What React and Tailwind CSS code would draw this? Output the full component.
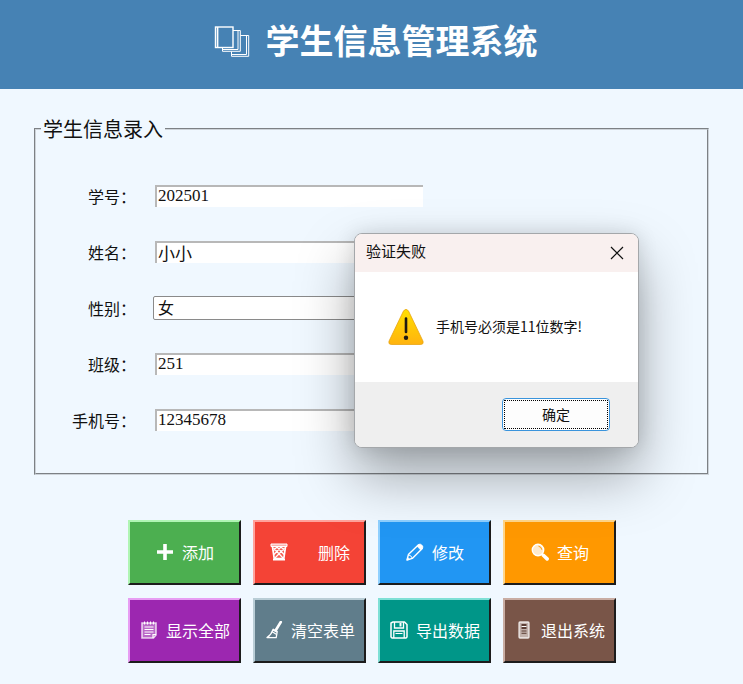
import React from "react";

const fields = [
  { id: "student-id", label: "学号：", value: "202501" },
  { id: "name", label: "姓名：", value: "小小" },
  { id: "gender", label: "性别：", value: "女", options: ["男", "女"] },
  { id: "class", label: "班级：", value: "251" },
  { id: "phone", label: "手机号：", value: "12345678" },
];

const PagesIcon = () => (
  <svg className="h-8 w-9 shrink-0" viewBox="0 0 36 32" fill="none" stroke="#fff">
    <rect x="1.5" y="1" width="17.5" height="20.5" strokeWidth="1.4" />
    <path d="M3.6 1v20" strokeWidth="1.6" />
    <path d="M19 4.5h7.3v20.8H8.500v-3.600M24 4.500v19H8.500" strokeWidth="1" />
    <path d="M26.500 9.500h8.200v20.800H17.500v-4.800M32.500 9.500v19H17.500" strokeWidth="1" />
  </svg>
);

const PlusIcon = () => (
  <svg className="h-[18px] w-[18px] shrink-0" viewBox="0 0 18 18">
    <path d="M9 1v16M1 9h16" stroke="#fff" strokeWidth="3.6" />
  </svg>
);

const TrashIcon = () => (
  <svg className="h-[18px] w-[18px] shrink-0" viewBox="0 0 18 18" fill="none" stroke="#fff">
    <path d="M1 1h16v2.500H1z" fill="#fff" fillOpacity="0.6" strokeWidth="1" />
    <path d="M2.5 4l1.700 11.500h9.600L15.500 4" fill="#fff" fillOpacity="0.15" strokeWidth="1.700" />
    <path
      d="M3.500 5l9.500 10M7 4l7 7.500M11 4l4 4M14.500 5L5 15M11 4l-7 7.500M7 4L3 8"
      strokeWidth="1.200"
    />
    <path d="M3 16.600h12" strokeWidth="1.800" />
  </svg>
);

const PencilIcon = () => (
  <svg className="h-[18px] w-[18px] shrink-0" viewBox="0 0 18 18" fill="none" stroke="#fff">
    <path d="M1 17l1.400-5.400L12.500 1.800l3.800 3.700L6.300 15.400z" strokeWidth="1.400" strokeLinejoin="round" />
    <path d="M11 3.200l2-2q1.200-.8 2.600.6l.8.8q1.200 1.300.3 2.500l-2 2z" fill="#fff" strokeWidth="0.5" />
    <path d="M2.400 11.800q2.800.4 4 3.600" strokeWidth="1" />
    <path d="M1 17l.7-2.600 2 1.900z" fill="#fff" strokeWidth="0.5" />
  </svg>
);

const SearchIcon = () => (
  <svg className="h-[18px] w-[18px] shrink-0" viewBox="0 0 18 18">
    <circle cx="7" cy="7" r="5.700" fill="#fff" fillOpacity="0.8" stroke="#fff" strokeWidth="1.400" />
    <path d="M7.500 3.200a4 4 0 0 1 3.300 3.500" fill="none" stroke="#ff9800" strokeWidth="1" />
    <path d="M11 11l1.600 1.400" stroke="#fff" strokeWidth="2" />
    <path d="M12.300 12.300l3.800 3.600" stroke="#fff" strokeWidth="3.600" strokeLinecap="round" />
  </svg>
);

const ListIcon = () => (
  <svg className="h-[18px] w-[18px] shrink-0" viewBox="0 0 18 18" fill="none" stroke="#fff">
    <path d="M2 2h14v12l-2.500 3H2z" fill="#fff" fillOpacity="0.3" strokeWidth="1.600" strokeOpacity="0.75" />
    <path d="M4.500.5v3M7.500.5v3M10.500.5v3M13.500.5v3" strokeWidth="1" />
    <path d="M4.500 6h9M4.500 8.500h9M4.500 11h9M4.500 13.500h6" strokeWidth="1" />
    <path d="M16 13.500h-3V17" strokeWidth="1.200" />
  </svg>
);

const BroomIcon = () => (
  <svg className="h-[18px] w-[18px] shrink-0" viewBox="0 0 18 18" fill="none" stroke="#fff">
    <path d="M15.800 1L10.600 9.500" strokeWidth="2.600" strokeLinecap="round" />
    <path d="M8.200 8.200l4 2.400-1 6H2q4.400-3 6.200-8.400z" strokeWidth="1.300" strokeLinejoin="round" />
    <path d="M7.800 8.600l4.200 2.600M7.200 10.800l4 2.400" strokeWidth="1.300" />
  </svg>
);

const SaveIcon = () => (
  <svg className="h-[18px] w-[18px] shrink-0" viewBox="0 0 18 18" fill="none" stroke="#fff">
    <path d="M3 1h11.500L17 3.500V16l-1 1H2l-1-1V2z" strokeWidth="1.500" strokeLinejoin="round" />
    <path d="M4.500 1v6h9V1" strokeWidth="1.300" />
    <path d="M10.500 2v3.500" strokeWidth="2" />
    <path d="M3.800 17v-7h10.400v7" strokeWidth="1.300" />
    <path d="M5.500 12.500h7" strokeWidth="1" />
  </svg>
);

const DoorIcon = () => (
  <svg className="h-[18px] w-[18px] shrink-0" viewBox="0 0 18 18" fill="none" stroke="#fff">
    <rect x="4" y="1" width="10" height="16" rx="1" fill="#fff" fillOpacity="0.55" strokeWidth="1.300" strokeOpacity="0.8" />
    <rect x="6.500" y="3" width="5" height="5" fill="#5d3f36" stroke="none" />
    <path d="M6.500 5.500h5" strokeWidth="1" />
    <path d="M6.500 10h5M6.500 12.300h5" stroke="#5d3f36" strokeWidth="1" />
  </svg>
);

const actions = [
  { label: "添加", icon: PlusIcon, gap: "gap-2", color: "bg-[#4caf50] border-t-[#b0f5b4] border-l-[#b0f5b4]" },
  { label: "删除", icon: TrashIcon, gap: "gap-[30px]", color: "bg-[#f44336] border-t-[#ffa39c] border-l-[#ffa39c]" },
  { label: "修改", icon: PencilIcon, gap: "gap-2", color: "bg-[#2196f3] border-t-[#8fd0ff] border-l-[#8fd0ff]" },
  { label: "查询", icon: SearchIcon, gap: "gap-2", color: "bg-[#ff9800] border-t-[#ffd68a] border-l-[#ffd68a]" },
  { label: "显示全部", icon: ListIcon, gap: "gap-2", color: "bg-[#9c27b0] border-t-[#e79df3] border-l-[#e79df3]" },
  { label: "清空表单", icon: BroomIcon, gap: "gap-2", color: "bg-[#607d8b] border-t-[#b9cdd6] border-l-[#b9cdd6]" },
  { label: "导出数据", icon: SaveIcon, gap: "gap-2", color: "bg-[#009688] border-t-[#7fe0d6] border-l-[#7fe0d6]" },
  { label: "退出系统", icon: DoorIcon, gap: "gap-2", color: "bg-[#795548] border-t-[#c9ada3] border-l-[#c9ada3]" },
];

const FieldRow = ({ field }) => (
  <div className="flex h-6 items-center gap-[17px]">
    <label htmlFor={field.id} className="w-[100px] shrink-0 text-right text-base">
      {field.label}
    </label>
    {field.options ? (
      <select
        id={field.id}
        defaultValue={field.value}
        className="h-6 w-[272px] appearance-none rounded-[2px] border border-[#8a8a8a] bg-white pb-[2px] pl-1 text-base leading-5"
      >
        {field.options.map((option) => (
          <option key={option}>{option}</option>
        ))}
      </select>
    ) : (
      <input
        id={field.id}
        type="text"
        defaultValue={field.value}
        className="m-[2px] h-[22px] w-[268px] border-t-2 border-l-2 border-[#b8b8b8] bg-white pb-[2px] pl-[1px] font-['Liberation_Serif','Noto_Sans_CJK_SC',serif] text-[17px] leading-5"
      />
    )}
  </div>
);

const ActionButton = ({ action }) => {
  const Icon = action.icon;
  return (
    <button
      type="button"
      className={`flex h-[65px] items-center justify-center border-2 border-r-[#1c1c1c] border-b-[#1c1c1c] pb-[2px] pl-[2px] text-base text-white ${action.gap} ${action.color}`}
    >
      <Icon />
      {action.label}
    </button>
  );
};

const WarningIcon = () => (
  <svg className="h-9 w-9 shrink-0" viewBox="0 0 36 36">
    <defs>
      <linearGradient id="warn" x1="0" y1="0" x2="0" y2="1">
        <stop offset="0" stopColor="#ffe000" />
        <stop offset="1" stopColor="#ffb30f" />
      </linearGradient>
    </defs>
    <path
      d="M15.600 1.800q2.400-3 4.800 0L35 32.200q.9 3.200-2.200 3.300H3.200Q.1 35.400 1 32.200z"
      fill="url(#warn)"
      stroke="#e9a413"
      strokeWidth="0.8"
    />
    <path d="M18 9.500v13.500" stroke="#1e1a12" strokeWidth="2.600" strokeLinecap="round" />
    <circle cx="18" cy="28.700" r="2.200" fill="#1e1a12" />
  </svg>
);

const ErrorDialog = () => (
  <div
    role="alertdialog"
    aria-labelledby="dialog-title"
    aria-describedby="dialog-message"
    className="absolute top-[233px] left-[354px] w-[285px] overflow-hidden rounded-lg border border-[#a4a7aa] bg-white shadow-[0_28px_56px_rgba(0,0,0,0.34),0_0_20px_rgba(0,0,0,0.12)]"
  >
    <div className="flex h-[38px] items-center justify-between bg-[#f9f0ef] pr-[14px] pl-[11px]">
      <h2 id="dialog-title" className="pb-1 text-[15px] leading-5">
        验证失败
      </h2>
      <button type="button" aria-label="关闭">
        <svg className="h-[14px] w-[14px]" viewBox="0 0 14 14" stroke="#111" strokeWidth="1.200">
          <path d="M1 1l12 12M13 1L1 13" />
        </svg>
      </button>
    </div>
    <div className="flex h-[110px] items-center gap-3 pl-[33px]">
      <WarningIcon />
      <p id="dialog-message" className="pb-[2px] text-sm">
        手机号必须是11位数字!
      </p>
    </div>
    <div className="flex justify-end bg-[#efefef] px-7 py-4">
      <button
        type="button"
        className="h-[33px] w-[108px] rounded border border-[#3a94dc] bg-[#fdfdfd] p-px text-sm"
      >
        <span className="flex h-full items-center justify-center border border-dotted border-black pb-[2px]">
          确定
        </span>
      </button>
    </div>
  </div>
);

const App = () => (
  <div className="relative min-h-screen bg-[#f0f8ff] pb-[21px] font-['Noto_Sans_CJK_SC',sans-serif] text-[#111]">
    <header className="flex h-[89px] items-center justify-center gap-4 bg-[#4682b4] pb-[6px] pl-2 text-white">
      <PagesIcon />
      <h1 className="pb-1 text-[34px] leading-10 font-bold">学生信息管理系统</h1>
    </header>

    <main>
      <form>
        <fieldset className="mx-[34px] mt-7 border-2 [border-style:groove] border-[#cdd3d9] pt-[43px] pb-[41px]">
          <legend className="ml-[5px] px-[2px] text-xl leading-6">学生信息录入</legend>
          <div className="flex flex-col gap-8">
            {fields.map((field) => (
              <FieldRow key={field.id} field={field} />
            ))}
          </div>
        </fieldset>
        <div className="mx-auto mt-[45px] grid max-w-[488px] grid-cols-4 gap-x-3 gap-y-[13px]">
          {actions.map((action) => (
            <ActionButton key={action.label} action={action} />
          ))}
        </div>
      </form>
    </main>

    <ErrorDialog />
  </div>
);

export default App;
